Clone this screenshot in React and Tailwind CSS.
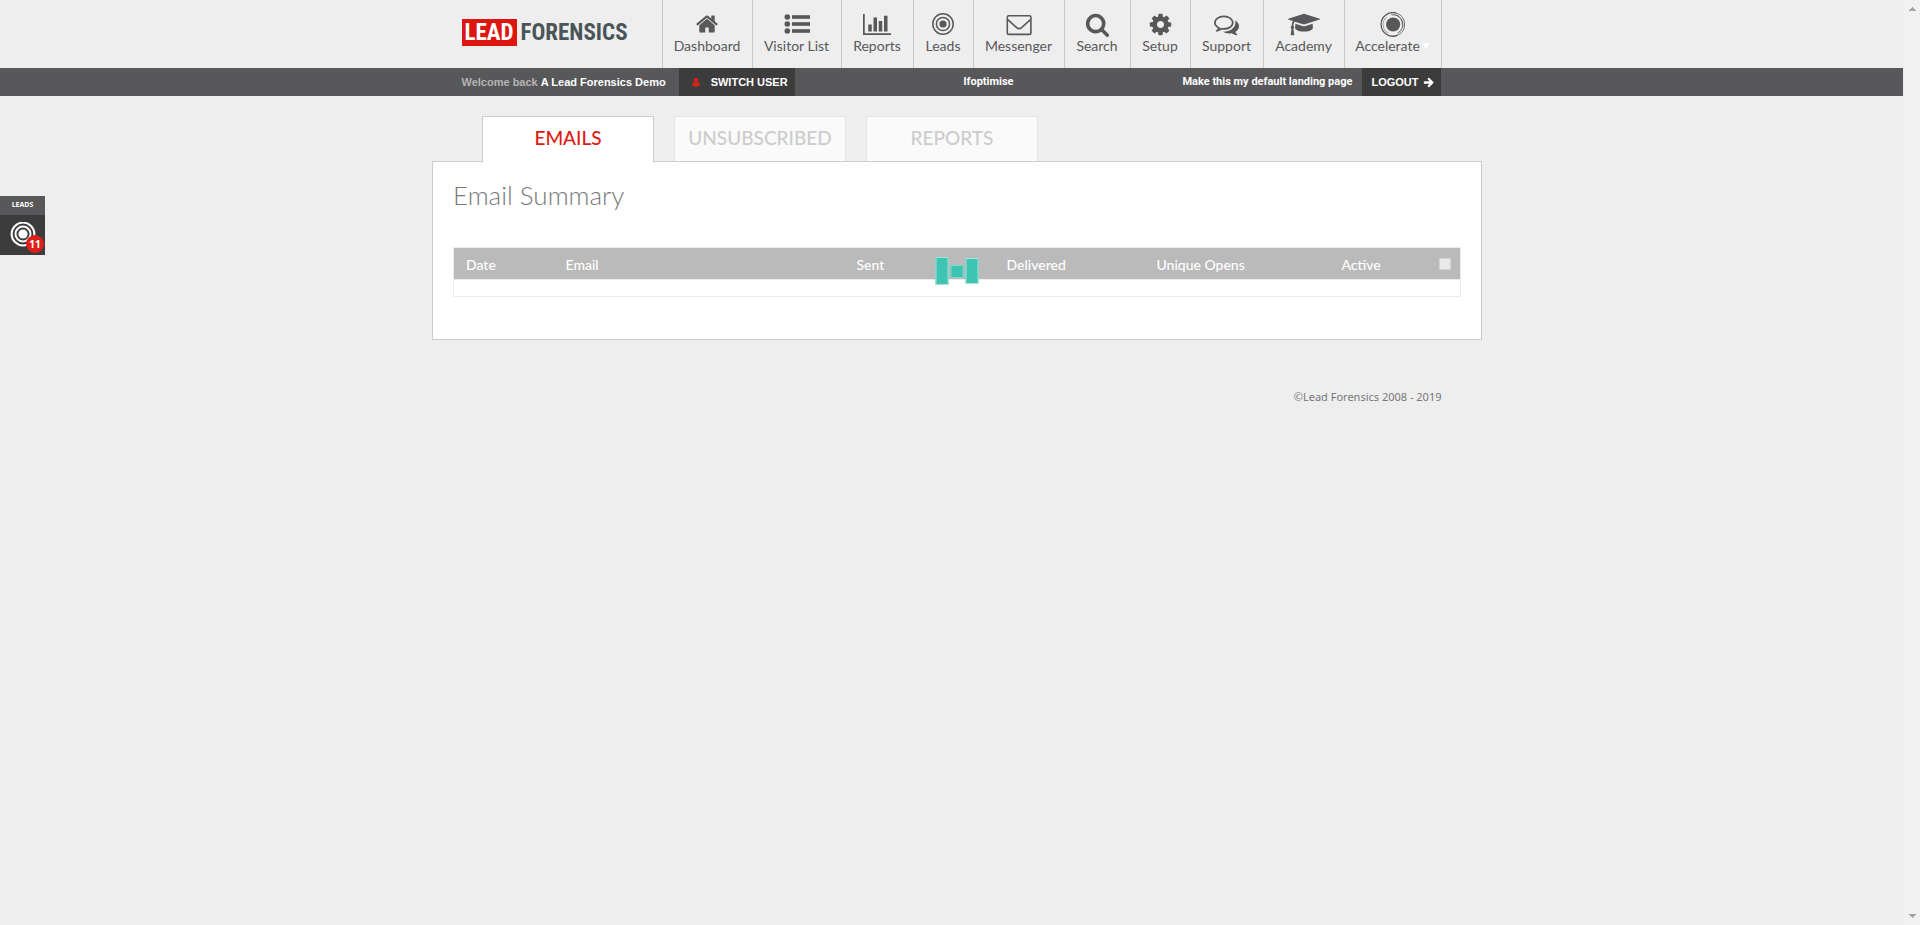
import React from "react";

function Glyph({ width = 1792, className, children }) {
  return (
    <svg viewBox={`0 0 ${width} 1792`} className={className} fill="currentColor" aria-hidden="true">
      {children}
    </svg>
  );
}

const HomeIcon = () => (
  <Glyph className="h-6 w-6">
    <path d="M1472 992v480q0 26-19 45t-45 19h-384v-384h-256v384h-384q-26 0-45-19t-19-45v-480q0-1 .5-3t.5-3l575-474 575 474q1 2 1 6zm223-69l-62 74q-8 9-21 11h-3q-13 0-21-7l-692-577-692 577q-12 8-24 7-13-2-21-11l-62-74q-8-10-7-23.5t11-21.5l719-599q32-26 76-26t76 26l244 204v-195q0-14 9-23t23-9h192q14 0 23 9t9 23v408l219 182q10 8 11 21.5t-7 23.5z" />
  </Glyph>
);

const ListIcon = () => (
  <svg viewBox="0 0 26 24" className="h-6 w-[26px]" fill="currentColor" aria-hidden="true">
    <circle cx="3.3" cy="5" r="2.8" />
    <circle cx="3.3" cy="12" r="2.8" />
    <circle cx="3.3" cy="19" r="2.8" />
    <rect x="8" y="3.2" width="18" height="3.6" />
    <rect x="8" y="10.2" width="18" height="3.6" />
    <rect x="8" y="17.2" width="18" height="3.6" />
  </svg>
);

const ChartIcon = () => (
  <Glyph width={2048} className="h-[25px] w-7">
    <path d="M640 896v512h-256v-512h256zm384-512v1024h-256v-1024h256zm1024 1152v128h-2048v-1536h128v1408h1920zm-640-896v768h-256v-768h256zm384-384v1152h-256v-1152h256z" />
  </Glyph>
);

const TargetIcon = () => (
  <svg viewBox="0 0 24 24" className="h-6 w-6" fill="none" stroke="currentColor" strokeWidth="1.5" aria-hidden="true">
    <circle cx="12" cy="12" r="10.2" />
    <circle cx="12" cy="12" r="6.6" />
    <circle cx="12" cy="12" r="3.6" fill="currentColor" stroke="none" />
  </svg>
);

const EnvelopeIcon = () => (
  <svg viewBox="0 0 26 24" className="h-6 w-[26px]" fill="none" stroke="currentColor" strokeWidth="1.6" aria-hidden="true">
    <rect x="1.3" y="3.8" width="23.6" height="18.6" rx="1.4" />
    <path d="M1.8 7.6L10.6 15.6Q13.1 17.6 15.6 15.6L24.4 7.6" />
  </svg>
);

const SearchIcon = () => (
  <Glyph className="h-[25px] w-[25px]">
    <path d="M1216 832q0-185-131.5-316.5t-316.5-131.5-316.5 131.5-131.5 316.5 131.5 316.5 316.5 131.5 316.5-131.5 131.5-316.5zm512 832q0 52-38 90t-90 38q-54 0-90-38l-343-342q-179 124-399 124-143 0-273.5-55.5t-225-150-150-225-55.5-273.5 55.5-273.5 150-225 225-150 273.5-55.5 273.5 55.5 225 150 150 225 55.5 273.5q0 220-124 399l343 343q37 37 37 90z" />
  </Glyph>
);

const CogIcon = () => (
  <Glyph className="h-[25px] w-[25px]">
    <path d="M1152 896q0-106-75-181t-181-75-181 75-75 181 75 181 181 75 181-75 75-181zm512-109v222q0 12-8 23t-20 13l-185 28q-19 54-39 91 35 50 107 138 10 12 10 25t-9 23q-27 37-99 108t-94 71q-12 0-26-9l-138-108q-44 23-91 38-16 136-29 186-7 28-36 28h-222q-14 0-24.5-8.5t-11.5-21.5l-28-184q-49-16-90-37l-141 107q-10 9-25 9-14 0-25-11-126-114-165-168-7-10-7-23 0-12 8-23 15-21 51-66.5t54-70.5q-27-50-41-99l-183-27q-13-2-21-12.5t-8-23.5v-222q0-12 8-23t19-13l186-28q14-46 39-92-40-57-107-138-10-12-10-24 0-10 9-23 26-36 98.5-107.5t94.5-71.5q13 0 26 10l138 107q44-23 91-38 16-136 29-186 7-28 36-28h222q14 0 24.5 8.5t11.5 21.5l28 184q49 16 90 37l142-107q9-9 24-9 13 0 25 10 129 119 165 170 7 8 7 22 0 12-8 23-15 21-51 66.5t-54 70.5q26 50 41 98l183 28q13 2 21 12.5t8 23.5z" />
  </Glyph>
);

const CommentsIcon = () => (
  <Glyph className="h-[25px] w-[25px]">
    <path d="M704 384q-153 0-286 52t-211.5 141-78.5 191q0 82 53 158t149 132l97 56-35 84q34-20 62-39l44-31 53 10q78 14 153 14 153 0 286-52t211.5-141 78.5-191-78.5-191-211.5-141-286-52zm0-128q191 0 353.5 68.5t256.5 186.5 94 257-94 257-256.5 186.5-353.5 68.5q-86 0-176-16-124 88-278 128-36 9-86 16h-3q-11 0-20.5-8t-11.5-21q-1-3-1-6.5t.5-6.5 2-6l2.5-5 3.5-5.5 4-5 4.5-5 4-4.5q5-6 23-25t26-29.5 22.5-29 25-38.5 20.5-44q-124-72-195-177t-71-224q0-139 94-257t256.5-186.5 353.5-68.5zm822 1169q10 24 20.5 44t25 38.5 22.5 29 26 29.5 23 25q1 1 4 4.5t4.5 5 4 5 3.5 5.5l2.5 5 2 6 .5 6.5-1 6.5q-3 14-13 22t-22 7q-50-7-86-16-154-40-278-128-90 16-176 16-271 0-472-132 58 4 88 4 161 0 309-45t264-129q125-92 192-212t67-254q0-77-23-152 129 71 204 178t75 230q0 120-71 224.5t-195 176.5z" />
  </Glyph>
);

const CapIcon = () => (
  <Glyph width={2304} className="h-[25px] w-8">
    <path d="M1774 836l18 316q4 69-82 128t-235 93.5-323 34.5-323-34.5-235-93.5-82-128l18-316 574 181q22 7 48 7t48-7zm530-324q0 23-22 31l-1120 352q-4 1-10 1t-10-1l-652-206q-43 34-71 111.5t-34 178.5q63 36 63 109 0 69-58 107l58 433q2 14-8 25-9 11-24 11h-192q-15 0-24-11-10-11-8-25l58-433q-58-38-58-107 0-73 65-111 11-207 98-330l-333-104q-22-8-22-31t22-31l1120-352q4-1 10-1t10 1l1120 352q22 8 22 31z" />
  </Glyph>
);

const AccelerateIcon = () => (
  <svg viewBox="0 0 24 24" className="h-[25px] w-[25px]" fill="none" stroke="currentColor" aria-hidden="true">
    <circle cx="12.6" cy="12" r="6.8" fill="currentColor" stroke="none" />
    <path d="M16 1.2A11.3 11.3 0 1 0 17 22.2" strokeWidth="1.2" />
    <path d="M16 1.2A11.3 11.3 0 0 1 17 22.2" strokeWidth="0.8" />
    <path d="M11 2.8A9.3 9.3 0 0 1 17 20.2" strokeWidth="0.9" />
    <path d="M15 2.6A9.8 9.8 0 0 1 21.4 13" strokeWidth="0.7" />
    <path d="M6.2 5A9.3 9.3 0 0 0 8 20.4" strokeWidth="0.5" />
  </svg>
);

const UserIcon = () => (
  <Glyph className="h-[10px] w-[10px] text-[#dc2018]">
    <path d="M1536 1399q0 109-62.5 187t-150.5 78h-854q-88 0-150.5-78t-62.5-187q0-85 8.5-160.5t31.5-152 58.5-131 94-89 134.5-34.5q131 128 313 128t313-128q76 0 134.5 34.5t94 89 58.5 131 31.5 152 8.5 160.5zm-256-887q0 159-112.5 271.5t-271.5 112.5-271.5-112.5-112.5-271.5 112.5-271.5 271.5-112.5 271.5 112.5 112.5 271.5z" />
  </Glyph>
);

const ArrowIcon = () => (
  <Glyph className="h-[11px] w-[11px]">
    <path d="M1728 896q0 54-37 91l-651 651q-39 37-91 37-51 0-90-37l-75-75q-38-38-38-91t38-91l293-293h-832q-52 0-84.500-37.500t-32.500-90.500v-128q0-53 32.500-90.500t84.500-37.500h832l-293-294q-38-36-38-90t38-90l75-75q38-38 90-38 53 0 91 38l651 651q37 35 37 90z" />
  </Glyph>
);

const NAV = [
  { label: "Dashboard", icon: HomeIcon, width: "w-[90px]" },
  { label: "Visitor List", icon: ListIcon, width: "w-[89px]" },
  { label: "Reports", icon: ChartIcon, width: "w-[72px]" },
  { label: "Leads", icon: TargetIcon, width: "w-[60px]" },
  { label: "Messenger", icon: EnvelopeIcon, width: "w-[91px]" },
  { label: "Search", icon: SearchIcon, width: "w-[66px]" },
  { label: "Setup", icon: CogIcon, width: "w-[60px]" },
  { label: "Support", icon: CommentsIcon, width: "w-[73px]" },
  { label: "Academy", icon: CapIcon, width: "w-[81px]" },
  { label: "Accelerate", icon: AccelerateIcon, width: "w-[97px]", menu: true },
];

const COLUMNS = [
  { label: "Date", width: "w-[100px]" },
  { label: "Email", width: "" },
  { label: "Sent", width: "w-[150px]" },
  { label: "Delivered", width: "w-[150px]" },
  { label: "Unique Opens", width: "w-[185px]" },
  { label: "Active", width: "w-[97px]" },
];

const TABS = ["EMAILS", "UNSUBSCRIBED", "REPORTS"];

function Header() {
  return (
    <header className="mx-auto flex h-[68px] max-w-[980px] justify-between">
      <a href="#home" className="mt-[19px] flex h-[27px] items-center font-['Roboto_Condensed','Open_Sans_Condensed',Roboto,sans-serif] text-[23px] leading-[27px] font-bold">
        <span className="bg-[#dd1610] px-[3px] text-white">LEAD</span>
        <span className="pl-1 text-[#4a5557]">FORENSICS</span>
      </a>
      <nav className="flex border-r border-[#c8c8c8]">
        {NAV.map(({ label, icon: Icon, width, menu }) => (
          <a
            key={label}
            href={`#${label.toLowerCase().replace(" ", "-")}`}
            className={`flex flex-col items-center border-l border-[#c8c8c8] pt-3 text-[#58585a] ${width}`}
          >
            <span className="flex h-6 items-center">
              <Icon />
            </span>
            <span className="flex items-center gap-[2px] text-sm leading-5 whitespace-nowrap">
              {label}
              {menu && (
                <svg viewBox="0 0 8 8" className="h-2 w-2" fill="#fff" aria-hidden="true">
                  <path d="M.5 1h7L4 7.5z" />
                </svg>
              )}
            </span>
          </a>
        ))}
      </nav>
    </header>
  );
}

function AccountBar() {
  return (
    <div className="bg-[#58585a] font-['Liberation_Sans',sans-serif] text-[11px] font-bold text-white">
      <div className="mx-auto flex h-7 max-w-[980px] items-stretch justify-between">
        <div className="flex items-stretch">
          <p className="flex items-center gap-[3px] whitespace-nowrap">
            <span className="text-[#b4b4b4]">Welcome back</span>
            <span>A Lead Forensics Demo</span>
          </p>
          <button type="button" className="ml-[13px] flex items-center gap-[10px] bg-[#3c3c3c] pr-[7px] pl-3 whitespace-nowrap">
            <UserIcon />
            SWITCH USER
          </button>
        </div>
        <span className="flex items-center font-[Roboto,sans-serif]">lfoptimise</span>
        <div className="flex items-stretch">
          <a href="#default" className="flex items-center font-[Roboto,sans-serif] whitespace-nowrap">Make this my default landing page</a>
          <button type="button" className="ml-[10px] flex items-center gap-[5px] bg-[#3c3c3c] pr-[7px] pl-[9px]">
            LOGOUT
            <ArrowIcon />
          </button>
        </div>
      </div>
    </div>
  );
}

function EmailPanel() {
  return (
    <main className="mx-auto w-full max-w-[1061px] pt-5 pl-[11px]">
      <div className="relative z-10 -mb-px flex gap-5 pl-[50px]" role="tablist">
        {TABS.map((tab, i) => (
          <button
            key={tab}
            type="button"
            role="tab"
            aria-selected={i === 0}
            className={
              i === 0
                ? "h-[46px] w-[172px] border border-b-0 border-[#ccc] bg-white pb-[3px] text-[19px] font-medium text-[#dc1c14]"
                : "mb-px h-[45px] w-[172px] border border-b-0 border-[#e4e4e4] bg-[#fafafa] pb-[2px] text-[19px] font-medium text-[#ccc]"
            }
          >
            {tab}
          </button>
        ))}
      </div>
      <section className="relative border border-[#ccc] bg-white px-5 pt-[17px] pb-[42px]">
        <h1 className="text-[26px] leading-8 font-light text-[#77787a]">Email Summary</h1>
        <table className="mt-9 w-full table-fixed border-collapse border border-[#ececec] text-left">
          <thead>
            <tr className="h-8 border-b border-[#ececec] bg-[#bababa] text-sm text-white">
              {COLUMNS.map(({ label, width }) => (
                <th key={label} scope="col" className={`px-3 pt-[3px] font-medium ${width}`}>
                  {label}
                </th>
              ))}
              <th scope="col" className="w-[34px] px-3">
                <input
                  type="checkbox"
                  aria-label="Select all"
                  className="block h-3 w-3 appearance-none border border-[#d2d2d2] bg-[#e9e9e9]"
                />
              </th>
            </tr>
          </thead>
          <tbody>
            <tr className="h-[17px]">
              <td colSpan={7} />
            </tr>
          </tbody>
        </table>
        <div className="absolute top-[95px] left-1/2 flex -translate-x-1/2 items-center gap-[2px]" role="status" aria-label="Loading">
          <span className="h-7 w-[13px] border border-[#a5e4db] bg-[#3dc4b3]" />
          <span className="h-[13px] w-[13px] border border-[#7fdace] bg-[#3dc4b3]" />
          <span className="h-[26px] w-[13px] border border-[#a5e4db] bg-[#3dc4b3]" />
        </div>
      </section>
    </main>
  );
}

function LeadsWidget() {
  return (
    <a href="#leads" className="fixed top-[196px] left-0 z-20 w-[45px] bg-[#3c3c3c] font-['Noto_Sans',sans-serif] text-white">
      <span className="block h-[19px] bg-[#58585a] text-center text-[7px] leading-[18px] font-bold">LEADS</span>
      <span className="relative flex h-10 items-center justify-center">
        <svg viewBox="0 0 26 26" className="h-[26px] w-[26px]" fill="none" stroke="currentColor" strokeWidth="2" aria-hidden="true">
          <circle cx="13" cy="12" r="11.4" />
          <circle cx="13" cy="12" r="7.5" />
          <circle cx="13" cy="12" r="4.6" fill="currentColor" stroke="none" />
        </svg>
        <span className="absolute right-px bottom-[2px] flex h-[18px] w-[18px] items-center justify-center rounded-full bg-[#de1f1a] text-[10px] font-bold">
          11
        </span>
      </span>
    </a>
  );
}

function ScrollRail() {
  return (
    <div className="sticky top-0 flex h-screen w-[17px] shrink-0 flex-col items-center justify-between border-l border-[#ededed] bg-[#f1f1f1] pt-[7px] pb-[7px] text-[#a3a3a3]" aria-hidden="true">
      <svg viewBox="0 0 7 4" className="h-1 w-[7px]" fill="currentColor"><path d="M3 0h1v1h1v1h1v1h1v1H0V3h1V2h1V1h1z" /></svg>
      <svg viewBox="0 0 7 4" className="h-1 w-[7px]" fill="currentColor"><path d="M0 0h7v1H6v1H5v1H4v1H3V3H2V2H1V1H0z" /></svg>
    </div>
  );
}

export default function App() {
  return (
    <div className="flex min-h-screen bg-[#eee] font-[Lato,sans-serif]">
      <div className="min-w-0 flex-1">
        <Header />
        <AccountBar />
        <EmailPanel />
        <footer className="mx-auto max-w-[980px] pt-12 text-right font-['Noto_Sans',sans-serif] text-[11px] leading-[18px] text-[#77787a]">
          ©Lead Forensics 2008 - 2019
        </footer>
      </div>
      <LeadsWidget />
      <ScrollRail />
    </div>
  );
}
